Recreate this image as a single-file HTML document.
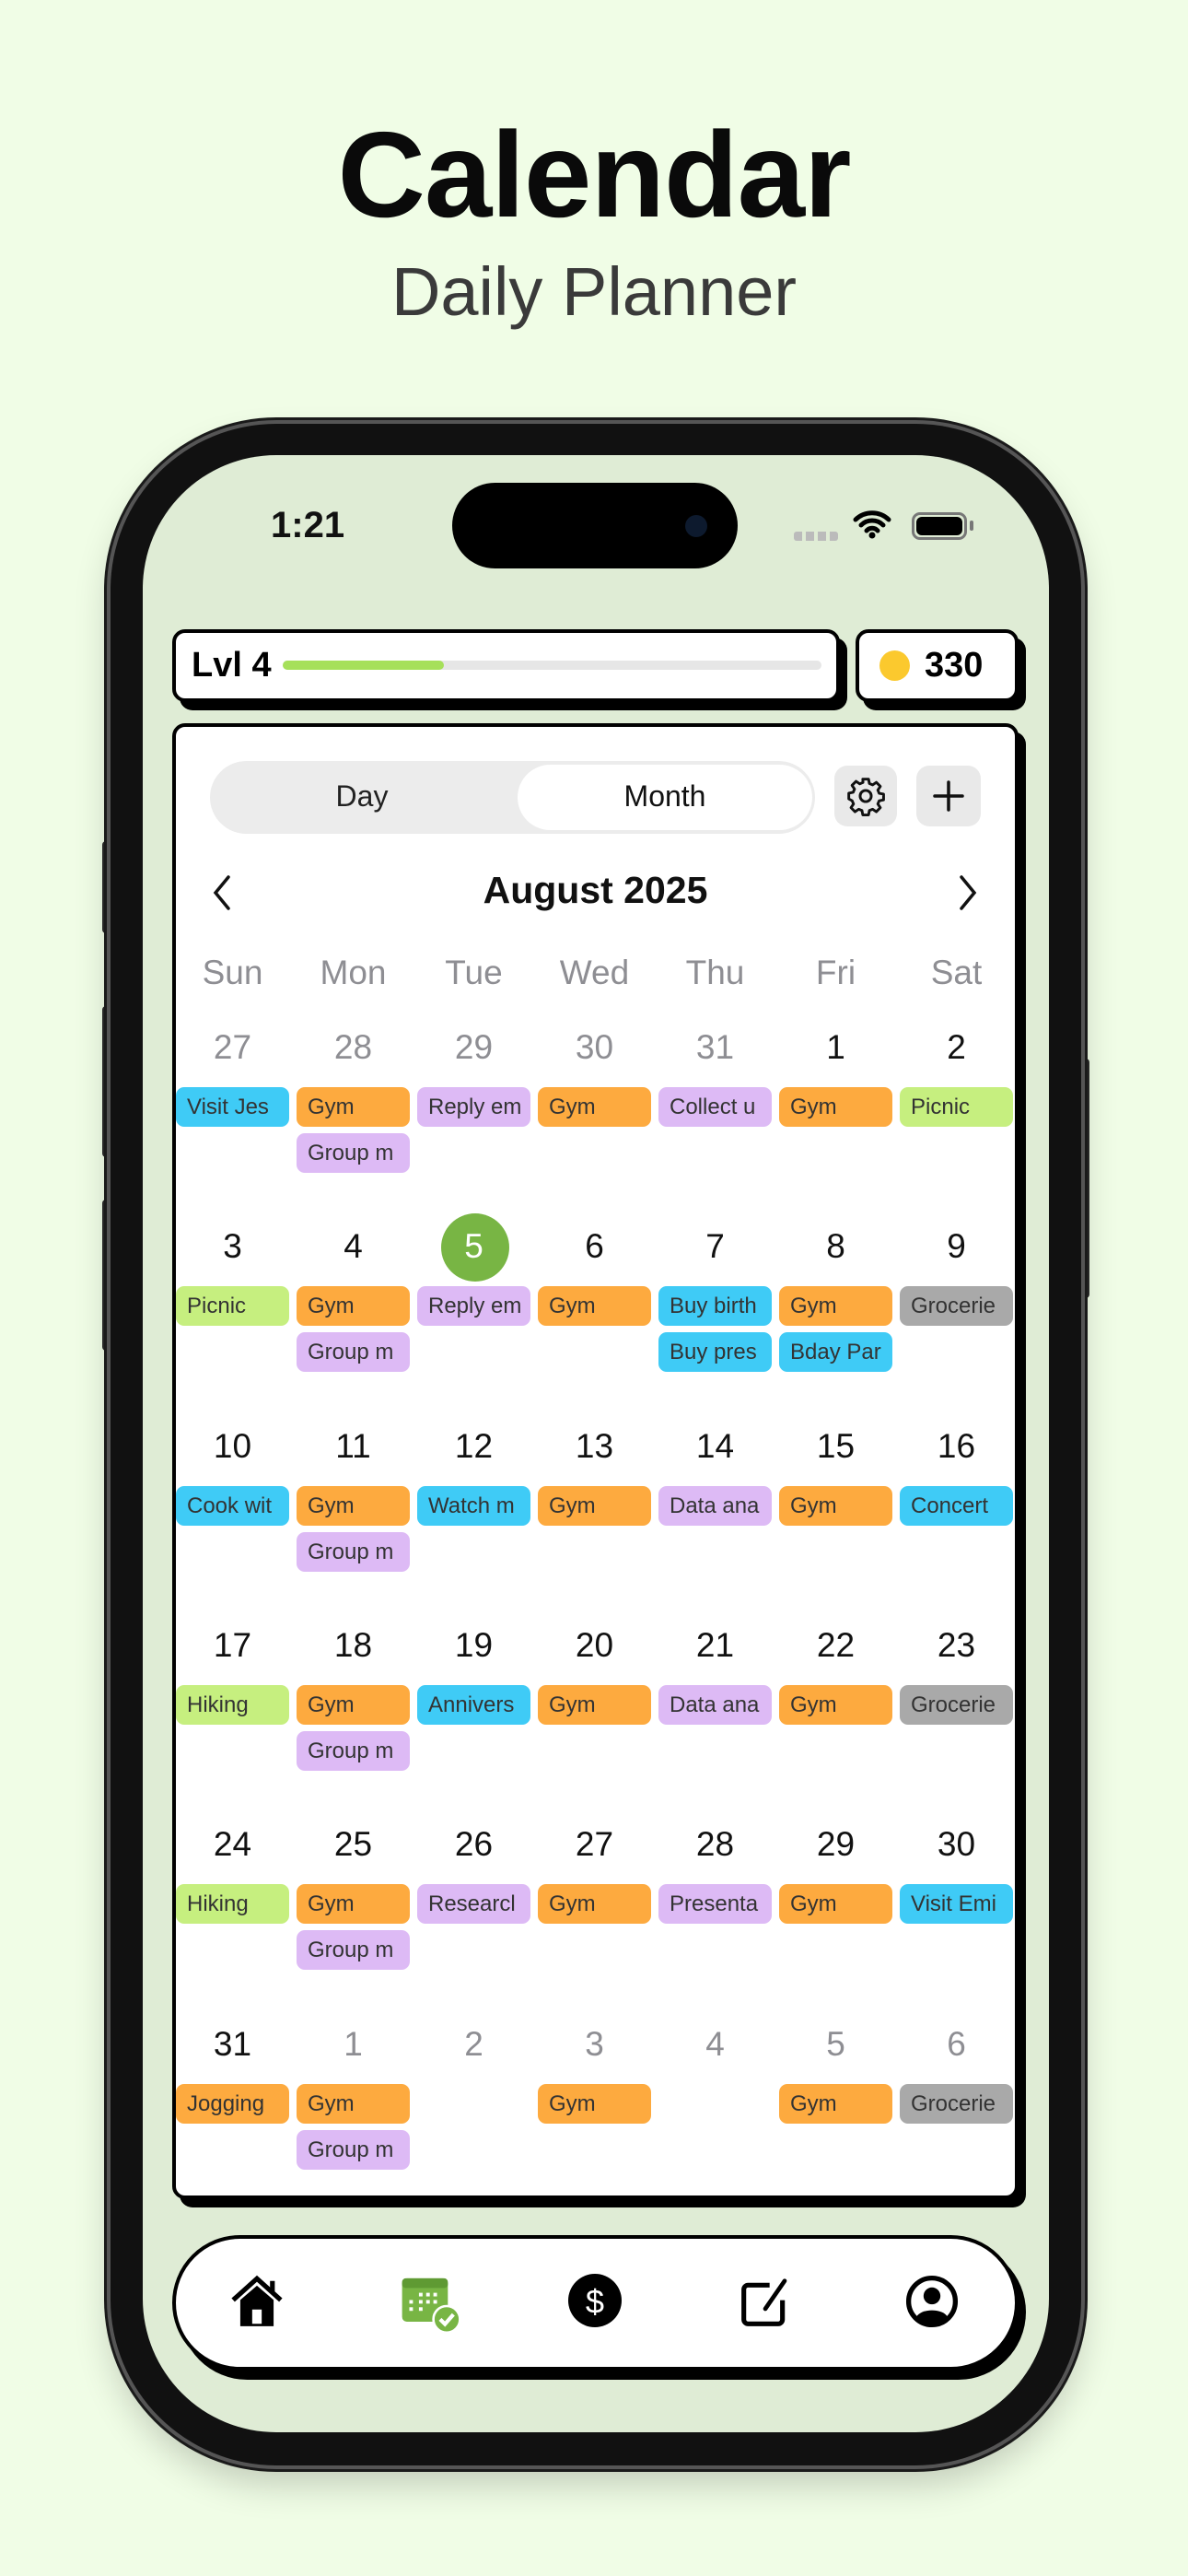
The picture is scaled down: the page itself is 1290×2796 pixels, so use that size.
<!DOCTYPE html>
<html><head><meta charset="utf-8"><style>
*{margin:0;padding:0;box-sizing:border-box}
body{width:1290px;height:2796px;background:#f0fde6;font-family:"Liberation Sans",sans-serif;position:relative;overflow:hidden}
.abs{position:absolute}
h1{position:absolute;left:0;width:1290px;top:114px;text-align:center;font-size:132px;font-weight:bold;color:#0a0a0a;letter-spacing:-1px}
h2{position:absolute;left:0;width:1290px;top:274px;text-align:center;font-size:74px;font-weight:normal;color:#3a3a3a}
.frame{left:120px;top:460px;width:1054px;height:2216px;border-radius:180px;background:#111;box-shadow:0 0 0 4px #555,0 0 0 7px #1a1a1a,0 20px 40px rgba(0,0,0,.2)}
.screen{left:155px;top:494px;width:984px;height:2146px;border-radius:145px;background:#dfecd5;overflow:hidden}
.btn{background:#2a2a2a;border-radius:4px}
.box{border:4px solid #000;background:#fff;border-radius:14px;box-shadow:8px 9px 0 #000}
.dn{position:absolute;width:131px;text-align:center;font-size:37px;color:#111}
.g{color:#8e8e93}
.wd{position:absolute;width:131px;text-align:center;font-size:37px;color:#8e8e93;top:1035px}
.c{position:absolute;width:123px;height:43px;border-radius:9px;font-size:24px;color:#333;padding-left:12px;line-height:43px;white-space:nowrap;overflow:hidden}
.b{background:#3fcbf6}.o{background:#fdaa3f}.p{background:#ddbaf5}.gr{background:#c6ef7f}.y{background:#a9a9a9}
</style></head><body>
<h1>Calendar</h1>
<h2>Daily Planner</h2>
<div class="abs btn" style="left:111px;top:913px;width:10px;height:100px"></div>
<div class="abs btn" style="left:111px;top:1092px;width:10px;height:164px"></div>
<div class="abs btn" style="left:111px;top:1302px;width:10px;height:164px"></div>
<div class="abs btn" style="left:1173px;top:1149px;width:10px;height:260px"></div>
<div class="abs frame"></div>
<div class="abs screen"></div>
<div class="abs" style="left:294px;top:548px;font-size:40px;font-weight:bold;color:#111">1:21</div>
<div class="abs" style="left:491px;top:524px;width:310px;height:93px;border-radius:47px;background:#000"></div>
<div class="abs" style="left:744px;top:559px;width:24px;height:24px;border-radius:50%;background:#0d1a2e"></div>
<div class="abs" style="left:862px;top:577px;width:48px;height:10px;background:repeating-linear-gradient(90deg,#bbb 0 9px,transparent 9px 13px);border-radius:3px"></div>
<svg class="abs" style="left:926px;top:553px" width="42" height="32" viewBox="0 0 42 32"><path d="M3 11a26 26 0 0 1 36 0M9 17a17 17 0 0 1 24 0M15 23a8 8 0 0 1 12 0" stroke="#000" stroke-width="5" fill="none" stroke-linecap="round"/><circle cx="21" cy="28" r="3.5"/></svg>
<div class="abs" style="left:990px;top:556px;width:60px;height:30px;border:3px solid #777;border-radius:9px;padding:2px"><div style="width:100%;height:100%;background:#000;border-radius:6px"></div></div>
<div class="abs" style="left:1053px;top:565px;width:4px;height:11px;background:#777;border-radius:2px"></div>

<div class="abs box" style="left:187px;top:683px;width:725px;height:79px"></div>
<div class="abs" style="left:208px;top:701px;font-size:38px;font-weight:bold">Lvl 4</div>
<div class="abs" style="left:307px;top:717px;width:585px;height:10px;border-radius:5px;background:#e6e6e6"><div style="width:175px;height:100%;border-radius:5px;background:#a6e05a"></div></div>
<div class="abs box" style="left:929px;top:683px;width:177px;height:79px"></div>
<div class="abs" style="left:955px;top:706px;width:33px;height:33px;border-radius:50%;background:#fbc92e"></div>
<div class="abs" style="left:1004px;top:701px;font-size:38px;font-weight:bold">330</div>

<div class="abs box" style="left:187px;top:785px;width:919px;height:1602px"></div>
<div class="abs" style="left:228px;top:826px;width:657px;height:79px;border-radius:40px;background:#ececec"></div>
<div class="abs" style="left:562px;top:830px;width:320px;height:71px;border-radius:36px;background:#fff"></div>
<div class="abs" style="left:228px;top:846px;width:330px;text-align:center;font-size:32px;color:#222">Day</div>
<div class="abs" style="left:562px;top:846px;width:320px;text-align:center;font-size:32px;color:#111">Month</div>
<div class="abs" style="left:906px;top:831px;width:68px;height:66px;border-radius:14px;background:#e9e9e9"></div>
<svg class="abs" style="left:918px;top:842px" width="44" height="44" viewBox="0 0 24 24"><path d="M10.3 2h3.4l.5 2.6 1.9.8 2.2-1.5 2.4 2.4-1.5 2.2.8 1.9 2.6.5v3.4l-2.6.5-.8 1.9 1.5 2.2-2.4 2.4-2.2-1.5-1.9.8-.5 2.6h-3.4l-.5-2.6-1.9-.8-2.2 1.5-2.4-2.4 1.5-2.2-.8-1.9L2 13.7v-3.4l2.6-.5.8-1.9-1.5-2.2 2.4-2.4 2.2 1.5 1.9-.8z" fill="none" stroke="#111" stroke-width="1.6" stroke-linejoin="round"/><circle cx="12" cy="12" r="3.3" fill="none" stroke="#111" stroke-width="1.6"/></svg>
<div class="abs" style="left:995px;top:831px;width:70px;height:66px;border-radius:14px;background:#e9e9e9"></div>
<svg class="abs" style="left:1012px;top:846px" width="36" height="36"><path d="M18 3v30M3 18h30" stroke="#111" stroke-width="3.5" stroke-linecap="round"/></svg>
<svg class="abs" style="left:228px;top:948px" width="26" height="42"><path d="M20 4 6 21l14 17" stroke="#111" stroke-width="3.5" fill="none" stroke-linecap="round"/></svg>
<svg class="abs" style="left:1038px;top:948px" width="26" height="42"><path d="M6 4l14 17L6 38" stroke="#111" stroke-width="3.5" fill="none" stroke-linecap="round"/></svg>
<div class="abs" style="left:187px;width:919px;top:943px;text-align:center;font-size:41px;font-weight:bold;color:#111">August 2025</div>

<div class="wd" style="left:187px">Sun</div><div class="wd" style="left:318px">Mon</div><div class="wd" style="left:449px">Tue</div><div class="wd" style="left:580px">Wed</div><div class="wd" style="left:711px">Thu</div><div class="wd" style="left:842px">Fri</div><div class="wd" style="left:973px">Sat</div>

<div class="abs" style="left:479px;top:1317px;width:74px;height:74px;border-radius:50%;background:#78b544"></div>

<div id="g"></div>
<script>
var rows=[
[["27",1,[["b","Visit Jes"]]],["28",1,[["o","Gym"],["p","Group m"]]],["29",1,[["p","Reply em"]]],["30",1,[["o","Gym"]]],["31",1,[["p","Collect u"]]],["1",0,[["o","Gym"]]],["2",0,[["gr","Picnic"]]]],
[["3",0,[["gr","Picnic"]]],["4",0,[["o","Gym"],["p","Group m"]]],["5",2,[["p","Reply em"]]],["6",0,[["o","Gym"]]],["7",0,[["b","Buy birth"],["b","Buy pres"]]],["8",0,[["o","Gym"],["b","Bday Par"]]],["9",0,[["y","Grocerie"]]]],
[["10",0,[["b","Cook wit"]]],["11",0,[["o","Gym"],["p","Group m"]]],["12",0,[["b","Watch m"]]],["13",0,[["o","Gym"]]],["14",0,[["p","Data ana"]]],["15",0,[["o","Gym"]]],["16",0,[["b","Concert"]]]],
[["17",0,[["gr","Hiking"]]],["18",0,[["o","Gym"],["p","Group m"]]],["19",0,[["b","Annivers"]]],["20",0,[["o","Gym"]]],["21",0,[["p","Data ana"]]],["22",0,[["o","Gym"]]],["23",0,[["y","Grocerie"]]]],
[["24",0,[["gr","Hiking"]]],["25",0,[["o","Gym"],["p","Group m"]]],["26",0,[["p","Researcl"]]],["27",0,[["o","Gym"]]],["28",0,[["p","Presenta"]]],["29",0,[["o","Gym"]]],["30",0,[["b","Visit Emi"]]]],
[["31",0,[["o","Jogging"]]],["1",1,[["o","Gym"],["p","Group m"]]],["2",1,[]],["3",1,[["o","Gym"]]],["4",1,[]],["5",1,[["o","Gym"]]],["6",1,[["y","Grocerie"]]]]];
var h="";
rows.forEach(function(r,i){var y=1116+i*216.3;r.forEach(function(d,j){var x=187+j*131;
h+='<div class="dn'+(d[1]==1?' g':'')+'" style="left:'+x+'px;top:'+y+'px'+(d[1]==2?';color:#fff':'')+'">'+d[0]+'</div>';
d[2].forEach(function(e,k){h+='<div class="c '+e[0]+'" style="left:'+(x+4)+'px;top:'+(y+64+k*50)+'px">'+e[1]+'</div>';});});});
document.getElementById("g").innerHTML=h;
</script>

<div class="abs" style="left:187px;top:2426px;width:919px;height:147px;border:4px solid #000;border-radius:74px;background:#fff;box-shadow:8px 10px 0 #000"></div>
<svg class="abs" style="left:248px;top:2468px" width="62" height="62" viewBox="0 0 24 24"><path d="M2 11 12 2l10 9" stroke="#000" stroke-width="2" fill="none"/><rect x="17.5" y="3" width="2" height="5"/><path d="M5 11l7-6 7 6v11H5z"/><rect x="10" y="15" width="4" height="6" fill="#fff"/></svg>
<svg class="abs" style="left:434px;top:2470px" width="68" height="66" viewBox="0 0 26 25"><rect x="1" y="1" width="19" height="18" rx="2" fill="#78b544"/><rect x="1" y="1" width="19" height="4" rx="1.5" fill="#5f9a33"/><g fill="#fff"><rect x="8" y="7" width="1.5" height="1.5"/><rect x="11" y="7" width="1.5" height="1.5"/><rect x="14" y="7" width="1.5" height="1.5"/><rect x="4" y="10" width="1.5" height="1.5"/><rect x="8" y="10" width="1.5" height="1.5"/><rect x="11" y="10" width="1.5" height="1.5"/><rect x="14" y="10" width="1.5" height="1.5"/><rect x="4" y="13" width="1.5" height="1.5"/><rect x="8" y="13" width="1.5" height="1.5"/></g><circle cx="19.5" cy="18" r="5.5" fill="#78b544" stroke="#fff" stroke-width="1"/><path d="M16.8 18l2 2 3.5-4" stroke="#fff" stroke-width="1.6" fill="none"/></svg>
<svg class="abs" style="left:617px;top:2468px" width="58" height="58" viewBox="0 0 24 24"><circle cx="12" cy="12" r="12"/><text x="12" y="17.5" text-anchor="middle" font-size="15" fill="#fff" font-family="Liberation Sans">$</text></svg>
<svg class="abs" style="left:803px;top:2470px" width="56" height="58" viewBox="0 0 24 24"><path d="M14 4H4a2 2 0 0 0-2 2v14a2 2 0 0 0 2 2h14a2 2 0 0 0 2-2V11" stroke="#000" stroke-width="2.2" fill="none"/><path d="M21 2l-9 13" stroke="#000" stroke-width="2" stroke-linecap="round"/></svg>
<svg class="abs" style="left:983px;top:2468px" width="58" height="60" viewBox="0 0 24 24"><circle cx="12" cy="12" r="10.5" stroke="#000" stroke-width="2.2" fill="#fff"/><circle cx="12" cy="9.5" r="3.8"/><path d="M5 19c2-4 12-4 14 0a10 10 0 0 1-14 0z"/></svg>
</body></html>
